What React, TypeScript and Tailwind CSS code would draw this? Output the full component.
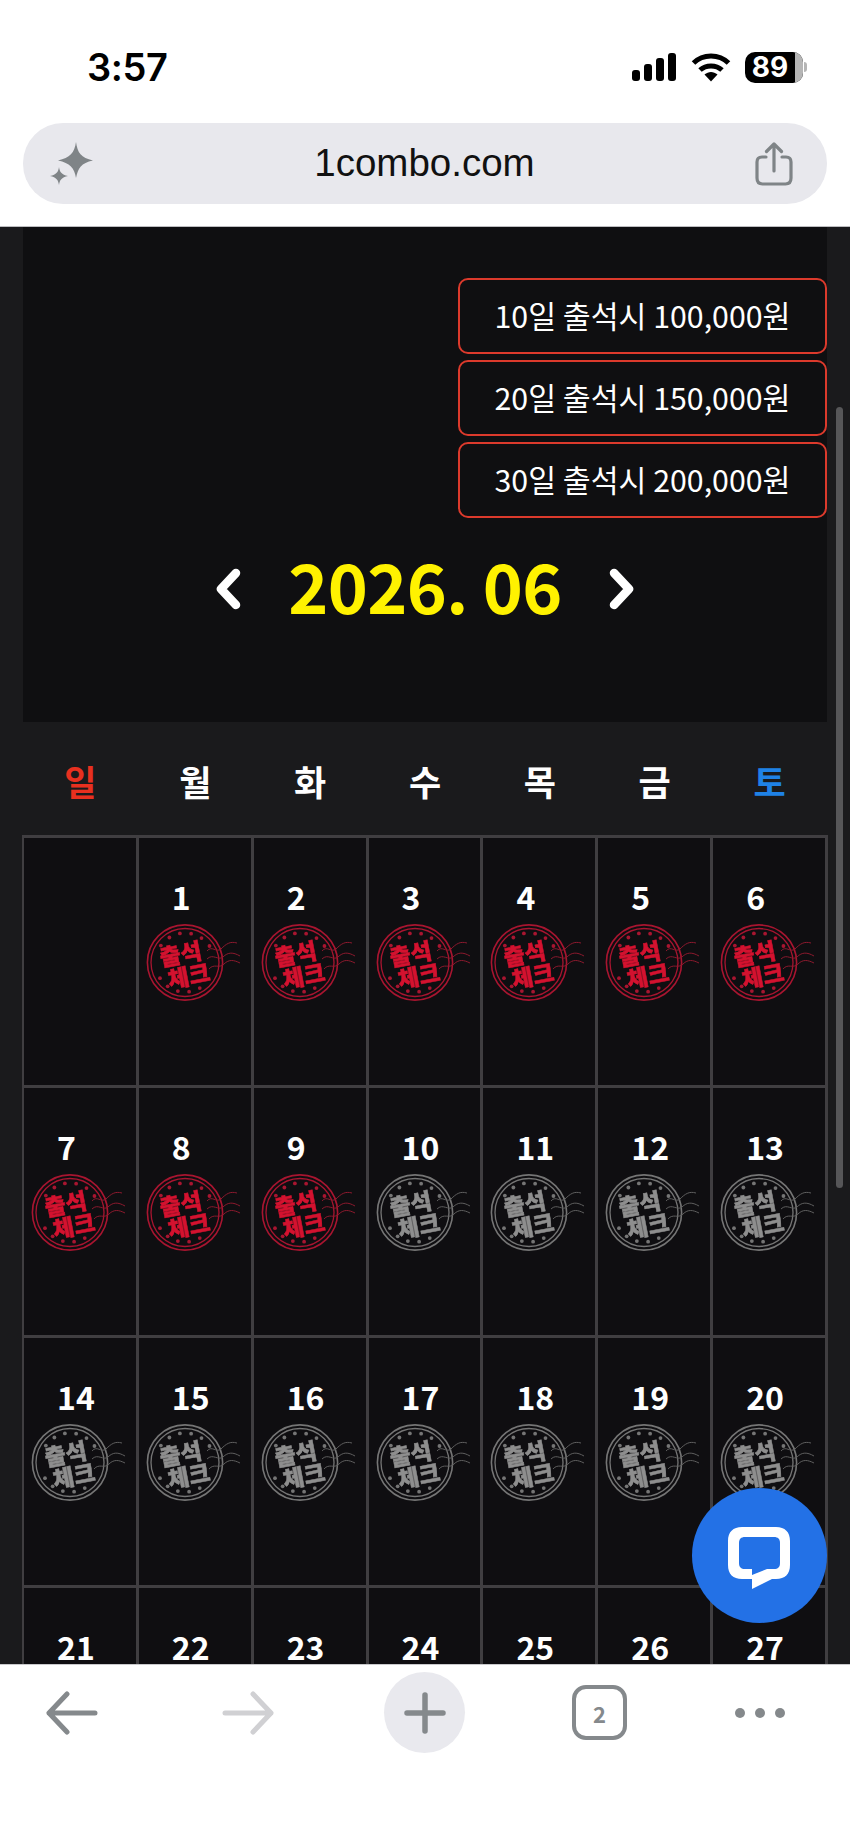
const CJK = "font-['Noto_Sans_CJK_KR','Noto_Sans',sans-serif]";

function Stamp({ on }: { on: boolean }) {
  const text = on ? "#d3122f" : "#8e8e8e";
  const ring = on ? "#a81530" : "#757575";
  const wave = on ? "#8c1a2e" : "#5f5f5f";
  const dots: [number, number][] = [];
  for (const a of [-145, -122, -100, -78, -56, -34, 60, 82, 104, 126, 148]) {
    const r = (a * Math.PI) / 180;
    dots.push([39 + 29.5 * Math.cos(r), 38.5 + 29.5 * Math.sin(r)]);
  }
  return (
    <svg width="98" height="78" viewBox="0 0 98 78" className="block ml-[7px] mt-[5px] blur-[0.3px]">
      <circle cx="39" cy="38.5" r="37.6" fill="none" stroke={ring} strokeWidth="1.6" />
      <circle cx="39" cy="38.5" r="34" fill="none" stroke={ring} strokeWidth="1.3" />
      {dots.map(([x, y], i) => (
        <circle key={i} cx={x} cy={y} r="1.9" fill={ring} />
      ))}
      <g fill={text} stroke={text} strokeWidth="0.5" fontFamily="'Noto Sans CJK KR', sans-serif" fontWeight="900" fontSize="23" transform="rotate(-11 39 38)">
        <text x="15" y="38">출석</text>
        <text x="19" y="61">체크</text>
      </g>
      <g fill="none" stroke={wave} strokeWidth="1">
        <path d="M61 27 C66 21 70 29 75 25 C80 20 84 17 91 19" />
        <path d="M61 35 C67 29 72 37 77 33 C82 28 87 28 94 32" />
        <path d="M63 45 C68 39 73 45 78 40 C83 35 88 36 94 39" />
      </g>
    </svg>
  );
}

function StatusBar() {
  return (
    <div className="h-[123px] relative">
      <div className="pl-[87px] pt-[44px] flex justify-between pr-[43px]">
        <span className="font-['Inter',sans-serif] font-semibold text-[38px] leading-[46px] tracking-[-0.4px] text-black">3:57</span>
        <div className="flex items-center gap-[14px] h-[46px]">
          <svg width="46" height="30" viewBox="0 0 46 30" fill="#000">
            <rect x="1" y="18" width="8" height="11" rx="3" />
            <rect x="13" y="12" width="8" height="17" rx="3" />
            <rect x="25" y="6" width="8" height="23" rx="3" />
            <rect x="37" y="1" width="8" height="28" rx="3" />
          </svg>
          <svg width="40" height="30" viewBox="0 0 40 30">
            <g fill="none" stroke="#000" strokeWidth="5">
              <path d="M2.5 11 C12 1.5 28 1.5 37.5 11" />
              <path d="M9 18 C15 12.5 25 12.5 31 18" />
            </g>
            <path d="M13.5 22.5 C17.5 19 22.5 19 26.5 22.5 L20 29.5 Z" fill="#000" />
          </svg>
          <div className="flex items-center">
            <div className="w-[58px] h-[31px] rounded-[10px] overflow-hidden bg-black flex relative">
              <div className="w-[50px] flex items-center justify-center text-white font-['Inter',sans-serif] font-bold text-[28px] leading-none">89</div>
              <div className="w-[8px] bg-[#b5b5b5]"></div>
            </div>
            <div className="w-[3px] h-[10px] ml-[1px] rounded-r-full bg-[#b5b5b5]"></div>
          </div>
        </div>
      </div>
    </div>
  );
}

function UrlBar() {
  return (
    <div className="mx-[23px] h-[81px] rounded-[40px] bg-[#e8e8ed] flex items-center justify-between pl-[27px] pr-[34px] relative">
      <svg width="44" height="44" viewBox="0 0 44 44" fill="#7f8487">
        <path d="M26 0 C27.5 11 31 15.5 43 18.5 C31 21 28 26 26 36 C24.5 26 20 21 8 18.5 C20 15.5 24.5 11 26 0 Z" />
        <path d="M9 25 C9.7 30 11.5 32.5 18 34 C11.5 35.5 9.7 38 9 43 C8.3 38 6.5 35.5 0 34 C6.5 32.5 8.3 30 9 25 Z" />
      </svg>
      <span className="font-['Liberation_Sans',sans-serif] text-[38.5px] leading-none text-[#111]">1combo.com</span>
      <svg width="38" height="44" viewBox="0 0 38 44" fill="none" stroke="#7f8487" strokeWidth="3.2" strokeLinecap="round" strokeLinejoin="round">
        <path d="M11 15 H7 C3.5 15 2 17 2 20 V36 C2 40 4 42 7.5 42 H30.5 C34 42 36 40 36 36 V20 C36 17 34.5 15 31 15 H27" />
        <path d="M19 29 V2.5 M11.5 9.5 L19 2 L26.5 9.5" />
      </svg>
    </div>
  );
}

function Panel() {
  const prizes = ["10일 출석시 100,000원", "20일 출석시 150,000원", "30일 출석시 200,000원"];
  return (
    <div className="bg-[#0f0f11] h-[495px] pt-[51px]">
      <div className="flex flex-col items-end gap-[6px]">
        {prizes.map((p) => (
          <div key={p} className={`w-[369px] h-[76px] rounded-[10px] border-[2.5px] border-[#dc3a2c] flex items-center justify-center text-white text-[30.3px] font-normal leading-none pb-[1px] ${CJK}`}>
            {p}
          </div>
        ))}
      </div>
      <div className="mt-[41px] h-[60px] flex items-center justify-center gap-[46px]">
        <svg width="28" height="42" viewBox="0 0 28 42" fill="none" stroke="#fff" strokeWidth="8.5" strokeLinecap="round" strokeLinejoin="round">
          <path d="M22 5 L7 21 L22 37" />
        </svg>
        <span className={`text-[#fff200] font-bold text-[68px] leading-none tracking-[-0.6px] -translate-y-[4px] ${CJK}`}>2026. 06</span>
        <svg width="28" height="42" viewBox="0 0 28 42" fill="none" stroke="#fff" strokeWidth="8.5" strokeLinecap="round" strokeLinejoin="round">
          <path d="M6 5 L21 21 L6 37" />
        </svg>
      </div>
    </div>
  );
}

function Weekdays() {
  return (
    <div className={`grid grid-cols-7 h-[114px] items-center pt-[2px] font-bold text-[35px] leading-none ${CJK}`}>
      <div className="text-center text-[#e8301f]">일</div>
      <div className="text-center text-white">월</div>
      <div className="text-center text-white">화</div>
      <div className="text-center text-white">수</div>
      <div className="text-center text-white">목</div>
      <div className="text-center text-white">금</div>
      <div className="text-center text-[#1f82e6]">토</div>
    </div>
  );
}

function Calendar() {
  const days: (number | null)[] = [null];
  for (let d = 1; d <= 27; d++) days.push(d);
  return (
    <div className="grid grid-cols-7 w-[806px] -ml-[1px] border-t-[3px] border-l-[2px] border-[#403e41] -mt-[1px]">
      {days.map((d, i) => (
        <div key={i} className="h-[250px] bg-[#0f0e11] border-r-[3px] border-b-[3px] border-[#403e41]">
          {d !== null && (
            <>
              <div className={`pt-[38px] pl-[33px] h-[81px] text-white font-bold text-[32px] leading-[40px] ${CJK}`}>{d}</div>
              {d < 22 && <Stamp on={d <= 9} />}
            </>
          )}
        </div>
      ))}
    </div>
  );
}

function Toolbar() {
  const g = "#85898c";
  return (
    <div className="h-[177px] bg-white border-t border-[#c9c9cc] pt-[7px] relative">
      <div className="h-[81px] flex items-center pl-[46px]">
        <svg width="52" height="44" viewBox="0 0 52 44" fill="none" stroke={g} strokeWidth="5" strokeLinecap="round" strokeLinejoin="round">
          <path d="M49 22 H3 M21 3 L3 22 L21 41" />
        </svg>
        <svg width="52" height="44" viewBox="0 0 52 44" fill="none" stroke="#d0d0d3" strokeWidth="5" strokeLinecap="round" strokeLinejoin="round" className="ml-[124px]">
          <path d="M3 22 H49 M31 3 L49 22 L31 41" />
        </svg>
        <div className="ml-[110px] w-[81px] h-[81px] rounded-full bg-[#e9e9ee] flex items-center justify-center">
          <svg width="42" height="42" viewBox="0 0 42 42" fill="none" stroke={g} strokeWidth="5.5" strokeLinecap="round">
            <path d="M21 3 V39 M3 21 H39" />
          </svg>
        </div>
        <div className={`ml-[107px] w-[55px] h-[55px] rounded-[14px] border-[4px] border-[#85898c] flex items-center justify-center text-[#85898c] text-[22px] font-bold leading-none ${CJK}`}>2</div>
        <div className="ml-[108px] flex gap-[10px]">
          <div className="w-[10px] h-[10px] rounded-full bg-[#85898c]"></div>
          <div className="w-[10px] h-[10px] rounded-full bg-[#85898c]"></div>
          <div className="w-[10px] h-[10px] rounded-full bg-[#85898c]"></div>
        </div>
      </div>
    </div>
  );
}

export default function App() {
  return (
    <div className="relative w-[850px] h-[1841px] overflow-hidden bg-white flex flex-col">
      <div className="h-[226px] shrink-0">
        <StatusBar />
        <UrlBar />
      </div>
      <div className="flex-1 min-h-0 overflow-hidden bg-[#1a1a1c] border-t border-[#bdbdc0] px-[23px]">
        <Panel />
        <Weekdays />
        <Calendar />
      </div>
      <Toolbar />
      <div className="absolute left-[836px] top-[407px] w-[7px] h-[781px] rounded-full bg-[#565658]"></div>
      <div className="absolute left-[692px] top-[1488px] w-[135px] h-[135px] rounded-full bg-[#2371e6] flex items-center justify-center">
        <svg width="135" height="135" viewBox="0 0 135 135">
          <path
            fill="#fff"
            fillRule="evenodd"
            d="M50 39 H84 C93 39 98 44 98 53 V77 C98 86 93 91 84 91 H80 L60 101 V91 H50 C41 91 36 86 36 77 V53 C36 44 41 39 50 39 Z M53 49 C49 49 47 51 47 55 V75 C47 79 49 81 53 81 H60 V87 L75 81 H82 C86 81 88 79 88 75 V55 C88 51 86 49 82 49 Z"
          />
        </svg>
      </div>
    </div>
  );
}
